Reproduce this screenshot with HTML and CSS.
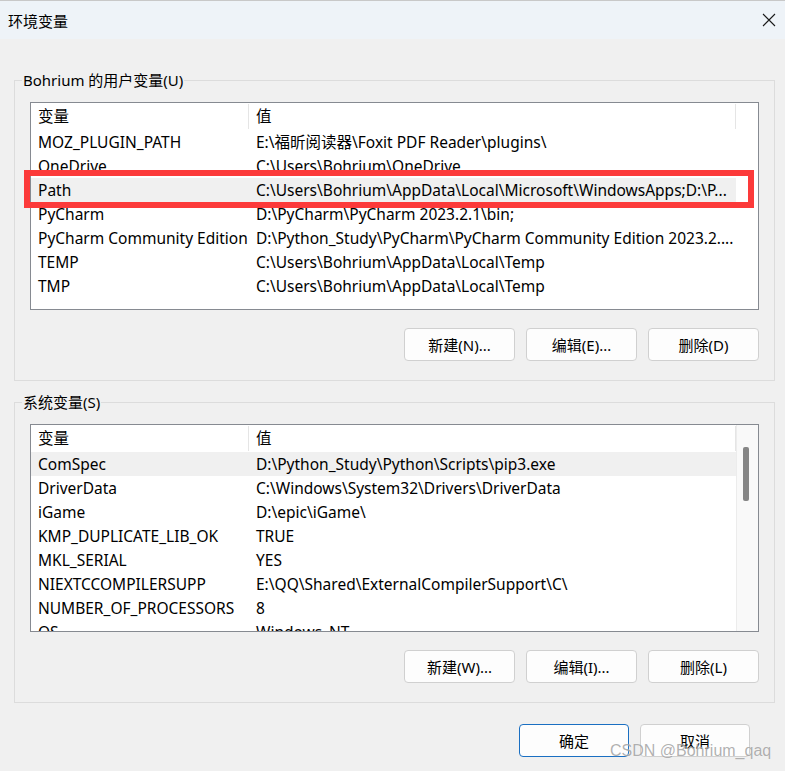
FILE: index.html
```html
<!DOCTYPE html>
<html lang="zh-CN">
<head>
  <meta charset="UTF-8">
  <meta name="viewport" content="width=device-width, initial-scale=1.0">
  <title>环境变量</title>
  <link rel="stylesheet" href="styles.css">
</head>
<body>

  <div class="window">
    <div class="titlebar">
      <span class="title">环境变量</span>
      <svg class="close" width="14" height="14" viewBox="0 0 14 14">
        <path d="M1 1 L13 13 M13 1 L1 13" stroke="#1a1a1a" stroke-width="1.1" fill="none"/>
      </svg>
    </div>

    <div class="content">
      <fieldset class="group">
        <legend>Bohrium 的用户变量(U)</legend>
        <div class="list">
          <div class="list-body">
            <div class="row head">
              <div class="col-name">变量</div>
              <div class="col-value">值</div>
            </div>
            <div class="row"><div class="col-name">MOZ_PLUGIN_PATH</div><div class="col-value">E:\福昕阅读器\Foxit PDF Reader\plugins\</div></div>
            <div class="row"><div class="col-name">OneDrive</div><div class="col-value">C:\Users\Bohrium\OneDrive</div></div>
            <div class="row selected"><div class="col-name">Path</div><div class="col-value">C:\Users\Bohrium\AppData\Local\Microsoft\WindowsApps;D:\P...</div></div>
            <div class="row"><div class="col-name">PyCharm</div><div class="col-value">D:\PyCharm\PyCharm 2023.2.1\bin;</div></div>
            <div class="row"><div class="col-name">PyCharm Community Edition</div><div class="col-value">D:\Python_Study\PyCharm\PyCharm Community Edition 2023.2....</div></div>
            <div class="row"><div class="col-name">TEMP</div><div class="col-value">C:\Users\Bohrium\AppData\Local\Temp</div></div>
            <div class="row"><div class="col-name">TMP</div><div class="col-value">C:\Users\Bohrium\AppData\Local\Temp</div></div>
          </div>
        </div>
        <div class="buttons">
          <button>新建(N)...</button>
          <button>编辑(E)...</button>
          <button>删除(D)</button>
        </div>
      </fieldset>

      <fieldset class="group second">
        <legend>系统变量(S)</legend>
        <div class="list">
          <div class="list-body">
            <div class="row head">
              <div class="col-name">变量</div>
              <div class="col-value">值</div>
            </div>
            <div class="row selected"><div class="col-name">ComSpec</div><div class="col-value">D:\Python_Study\Python\Scripts\pip3.exe</div></div>
            <div class="row"><div class="col-name">DriverData</div><div class="col-value">C:\Windows\System32\Drivers\DriverData</div></div>
            <div class="row"><div class="col-name">iGame</div><div class="col-value">D:\epic\iGame\</div></div>
            <div class="row"><div class="col-name">KMP_DUPLICATE_LIB_OK</div><div class="col-value">TRUE</div></div>
            <div class="row"><div class="col-name">MKL_SERIAL</div><div class="col-value">YES</div></div>
            <div class="row"><div class="col-name">NIEXTCCOMPILERSUPP</div><div class="col-value">E:\QQ\Shared\ExternalCompilerSupport\C\</div></div>
            <div class="row"><div class="col-name">NUMBER_OF_PROCESSORS</div><div class="col-value">8</div></div>
            <div class="row"><div class="col-name">OS</div><div class="col-value">Windows_NT</div></div>
          </div>
          <div class="scrollbar"><div class="thumb"></div></div>
        </div>
        <div class="buttons">
          <button>新建(W)...</button>
          <button>编辑(I)...</button>
          <button>删除(L)</button>
        </div>
      </fieldset>
    </div>

    <div class="footer">
      <button class="primary">确定</button>
      <button>取消</button>
    </div>

    <!-- 标注框 -->
    <div class="mark"></div>
    <div class="watermark">CSDN @Bohrium_qaq</div>
  </div>

</body>
</html>
```

FILE: styles.css
```css
body {
  margin: 0;
  padding: 0;
  background-color: #f0f0f0;
  font-family: "Noto Sans", "Noto Sans CJK SC", sans-serif;
  font-size: 15px;
  color: #000;
}

.window {
  position: relative;
  width: 785px;
  height: 771px;
  overflow: hidden;
}

.titlebar {
  box-sizing: border-box;
  height: 39px;
  background-color: #eef3f8;
  border-top: 1px solid #c8c8c8;
  display: flex;
  align-items: center;
  justify-content: space-between;
  padding: 0 9px 0 8px;
}

.title {
  font-family: "Noto Sans CJK SC", sans-serif;
  font-size: 15px;
}

.content {
  padding: 31px 10px 0 14px;
}

.group {
  margin: 0;
  padding: 12px 15px 19px 15px;
  border: 1px solid #dcdcdc;
  min-width: 0;
}

.group.second {
  margin-top: 11px;
}

legend {
  margin-left: -8px;
  padding: 0 1px;
  line-height: 20px;
}

.list {
  display: flex;
  height: 208px;
  box-sizing: border-box;
  border: 1px solid #868a91;
  background-color: #fff;
  overflow: hidden;
  font-size: 15.5px;
}

.list-body {
  flex: 1;
}

.row {
  display: flex;
  height: 24px;
  line-height: 24px;
  white-space: nowrap;
}

.row.head {
  height: 27px;
  line-height: 27px;
}

.row.selected {
  background-color: #f0f0f0;
  width: 705px;
}

.col-name {
  box-sizing: border-box;
  width: 218px;
  padding-left: 7px;
  overflow: hidden;
}

.col-value {
  box-sizing: border-box;
  width: 487px;
  padding-left: 7px;
  overflow: hidden;
}

.head .col-name,
.head .col-value {
  border-right: 1px solid #e5e5e5;
  margin: 1px 0 1px;
  line-height: 25px;
}

.scrollbar {
  width: 21px;
  background-color: #f9f9f9;
  border-left: 1px solid #ececec;
  padding-top: 22px;
}

.thumb {
  width: 6px;
  height: 54px;
  margin-left: 6px;
  background-color: #868686;
  border-radius: 2px;
}

.buttons {
  display: flex;
  justify-content: flex-end;
  gap: 11px;
  margin-top: 18px;
}

button {
  box-sizing: border-box;
  width: 111px;
  height: 33px;
  background-color: #fdfdfd;
  border: 1px solid #d0d0d0;
  border-radius: 4px;
  font-family: "Noto Sans", "Noto Sans CJK SC", sans-serif;
  font-size: 15px;
  color: #000;
  padding: 0;
}

button.primary {
  border: 1px solid #1a6fc2;
}

.footer {
  display: flex;
  justify-content: flex-end;
  gap: 11px;
  padding: 21px 35px 0 0;
}

.footer button {
  width: 110px;
}

.mark {
  position: absolute;
  left: 24px;
  top: 170px;
  width: 730px;
  height: 38px;
  box-sizing: border-box;
  border: 6px solid #fc3a3a;
}

.watermark {
  position: absolute;
  left: 610px;
  top: 742px;
  font-family: "Liberation Sans", sans-serif;
  font-size: 16px;
  color: rgba(110, 110, 110, 0.55);
  text-shadow: 0 0 1px rgba(255, 255, 255, 0.8);
}
```
